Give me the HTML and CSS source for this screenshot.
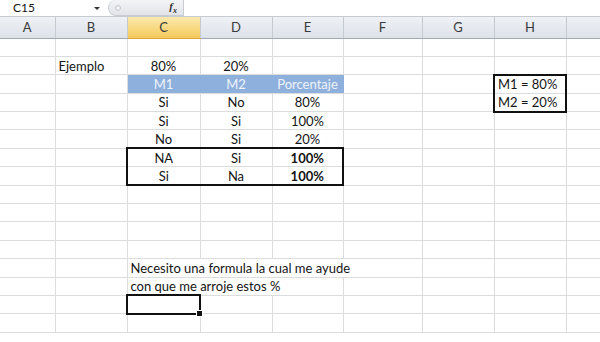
FILE: index.html
```html
<!DOCTYPE html>
<html>
<head>
	<meta charset="utf-8">
	<title>Libro1</title>
	<link rel="stylesheet" href="styles.css">
</head>
<body>
	<div class="barra">
		<div class="nombre">C15<span class="flecha"></span></div>
		<div class="fx-caja"><span class="grip"></span><span class="fx">f<sub>x</sub></span></div>
		<div class="formula"></div>
	</div>

	<table class="hoja">
		<colgroup>
			<col style="width:55px"><col style="width:72px"><col style="width:73px"><col style="width:72px">
			<col style="width:71px"><col style="width:79px"><col style="width:72px"><col style="width:72px"><col>
		</colgroup>
		<tr class="cab">
			<th>A</th><th>B</th><th class="activa">C</th><th>D</th><th>E</th><th>F</th><th>G</th><th>H</th><th></th>
		</tr>
		<tr><td></td><td></td><td></td><td></td><td></td><td></td><td></td><td></td><td></td></tr>
		<tr><td></td><td>Ejemplo</td><td class="c">80%</td><td class="c">20%</td><td></td><td></td><td></td><td></td><td></td></tr>
		<tr><td></td><td></td><td class="c azul">M1</td><td class="c azul">M2</td><td class="c azul">Porcentaje</td><td></td><td></td><td class="bt bl br">M1 = 80%</td><td></td></tr>
		<tr><td></td><td></td><td class="c">Si</td><td class="c">No</td><td class="c">80%</td><td></td><td></td><td class="bb bl br">M2 = 20%</td><td></td></tr>
		<tr><td></td><td></td><td class="c">Si</td><td class="c">Si</td><td class="c">100%</td><td></td><td></td><td></td><td></td></tr>
		<tr><td></td><td></td><td class="c">No</td><td class="c">Si</td><td class="c">20%</td><td></td><td></td><td></td><td></td></tr>
		<tr><td></td><td></td><td class="c bt bl">NA</td><td class="c bt">Si</td><td class="c bt br b">100%</td><td></td><td></td><td></td><td></td></tr>
		<tr><td></td><td></td><td class="c bb bl">Si</td><td class="c bb">Na</td><td class="c bb br b">100%</td><td></td><td></td><td></td><td></td></tr>
		<tr><td></td><td></td><td></td><td></td><td></td><td></td><td></td><td></td><td></td></tr>
		<tr><td></td><td></td><td></td><td></td><td></td><td></td><td></td><td></td><td></td></tr>
		<tr><td></td><td></td><td></td><td></td><td></td><td></td><td></td><td></td><td></td></tr>
		<tr><td></td><td></td><td></td><td></td><td></td><td></td><td></td><td></td><td></td></tr>
		<tr><td></td><td></td><td class="nr"><div class="desborde">Necesito una formula la cual me ayude</div></td><td class="nr"></td><td class="nr"></td><td></td><td></td><td></td><td></td></tr>
		<tr><td></td><td></td><td class="nr"><div class="desborde">con que me arroje estos %</div></td><td class="nr"></td><td></td><td></td><td></td><td></td><td></td></tr>
		<tr><td></td><td></td><td class="sel"></td><td></td><td></td><td></td><td></td><td></td><td></td></tr>
		<tr><td></td><td></td><td></td><td></td><td></td><td></td><td></td><td></td><td></td></tr>
	</table>
</body>
</html>
```

FILE: styles.css
```css
body {
	margin: 0;
	width: 600px;
	height: 342px;
	overflow: hidden;
	background: #fff;
	font: 13px Lato, "Liberation Sans", sans-serif;
	color: #141414;
}

/* barra de formulas */
.barra {
	display: flex;
	height: 16px;
	border-bottom: 1px solid #c6cbd2;
	background: #fff;
}
.nombre {
	position: relative;
	width: 92px;
	padding-left: 13px;
	line-height: 16px;
	font-size: 12px;
}
.flecha {
	position: absolute;
	left: 94px;
	top: 7px;
	border: 3px solid transparent;
	border-top: 3px solid #333;
	border-bottom: 0;
}
.fx-caja {
	display: flex;
	align-items: center;
	justify-content: space-between;
	width: 76px;
	margin-left: 3px;
	padding: 0 6px 0 6px;
	box-sizing: border-box;
	background: linear-gradient(#f3f4f6, #e2e4e8);
	border: 1px solid #c9cdd3;
	border-top: 0;
	border-radius: 9px 0 0 9px;
}
.grip {
	width: 4px;
	height: 4px;
	border-radius: 50%;
	border: 1px solid #c4c8cd;
	background: #eef0f2;
}
.fx {
	font: italic bold 11px "Liberation Serif", serif;
	color: #333;
}
.fx sub {
	font-size: 8px;
}
.formula {
	flex: 1;
}

/* hoja */
.hoja {
	table-layout: fixed;
	border-collapse: collapse;
	width: 620px;
}
.hoja tr {
	height: 18.4px;
}
.hoja tr.cab {
	height: 21px;
}
.hoja td {
	padding: 0 3px;
	border: 1px solid #dadcdd;
	border-top: 0;
	border-left: 0;
	white-space: nowrap;
	overflow: visible;
	line-height: 14px;
}
.cab th {
	padding: 0;
	font-weight: normal;
	font-size: 13px;
	color: #3a3a3a;
	background: linear-gradient(#eef1f5, #dde2e9);
	border-right: 1px solid #c5cbd3;
	border-bottom: 1px solid #9eaab8;
}
.cab th.activa {
	background: linear-gradient(#fbe9ae, #f4c95a);
	border-bottom-color: #e0a83a;
}

.c { text-align: center; }
.b { font-weight: bold; }
.azul {
	background: #8eb0dc;
	color: #eef3fb;
	border-right-color: #8eb0dc !important;
}
.hoja td.bt { border-top: 2px solid #111; }
.hoja td.bb { border-bottom: 2px solid #111; }
.hoja td.bl { border-left: 2px solid #111; }
.hoja td.br { border-right: 2px solid #111; }
.hoja td.nr { border-right-color: #fff; }

.desborde {
	width: 0;
	overflow: visible;
}

.hoja td.sel {
	position: relative;
	border: 2px solid #111;
}
.sel::after {
	content: "";
	position: absolute;
	right: -4px;
	bottom: -4px;
	width: 5px;
	height: 5px;
	background: #111;
	border: 1px solid #fff;
}
```
